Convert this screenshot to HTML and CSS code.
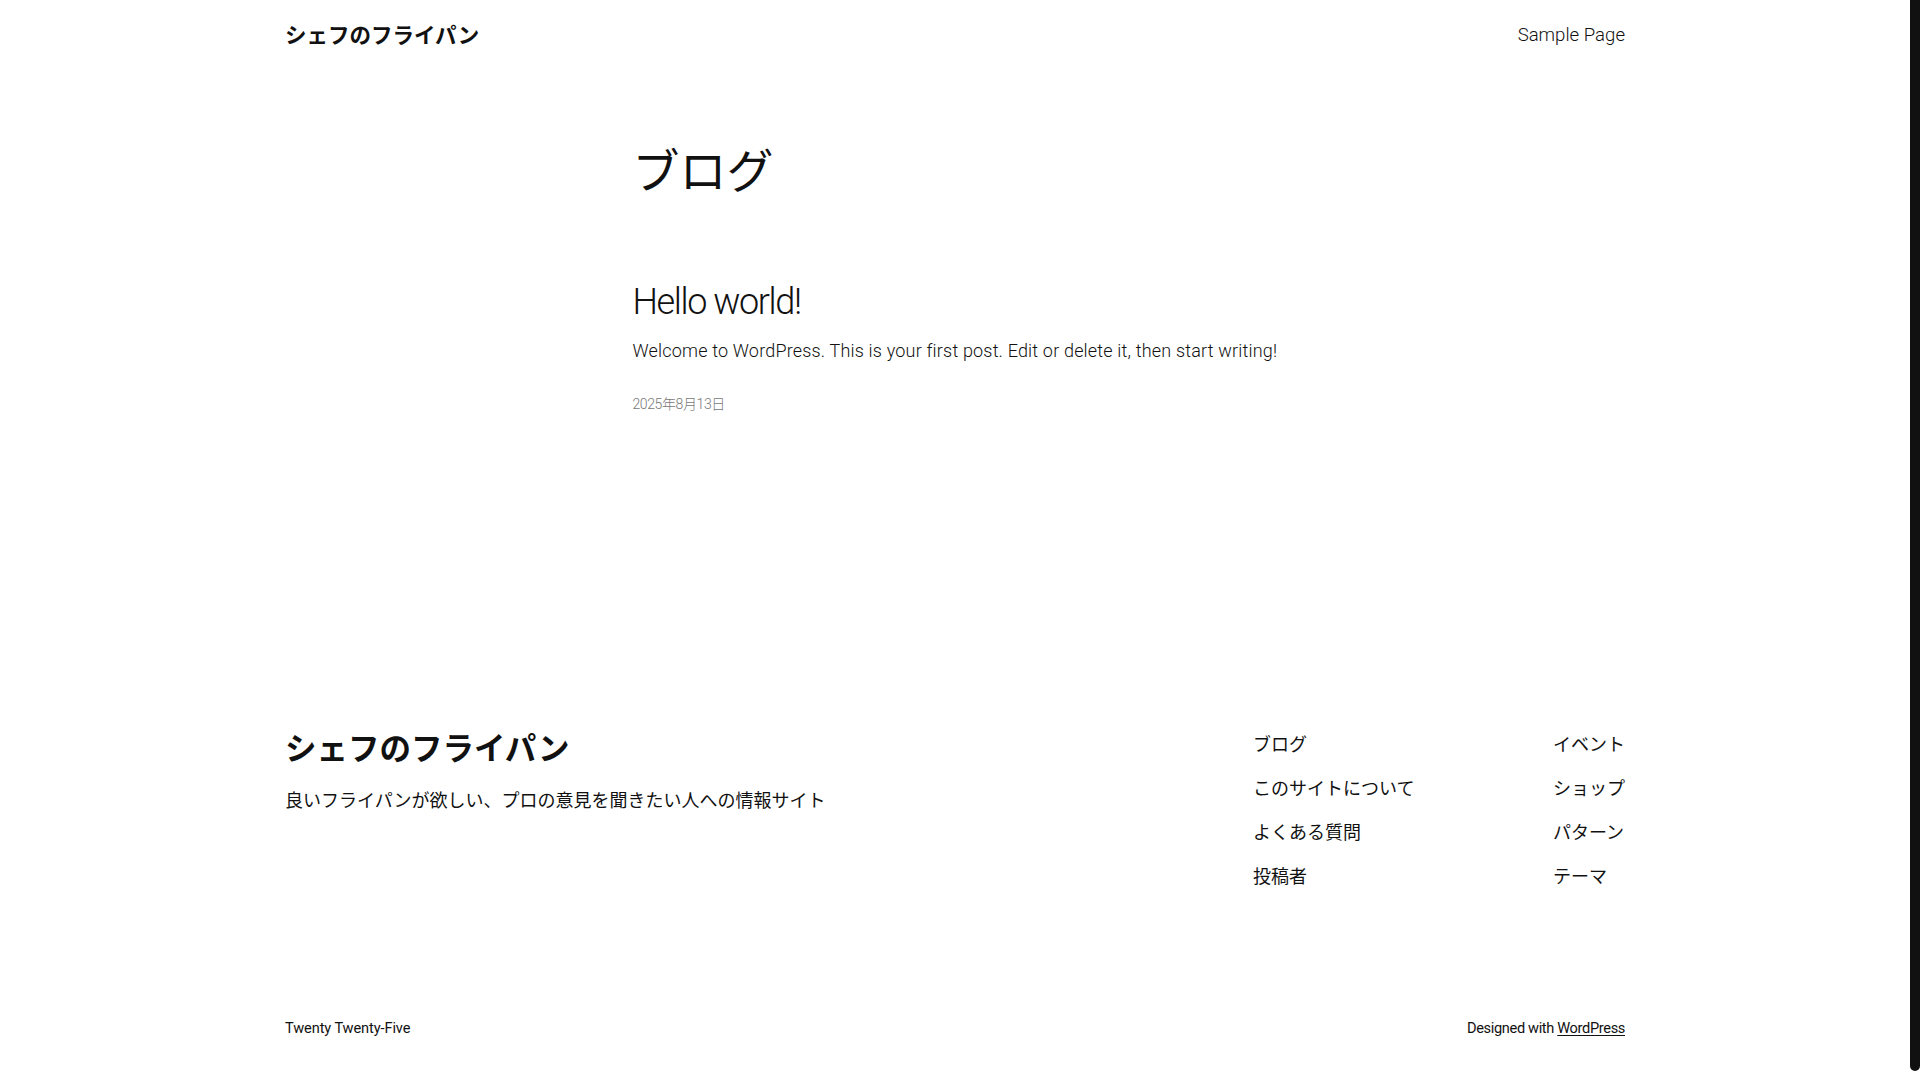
FILE: index.html
```html
<!DOCTYPE html>
<html lang="ja">
<head>
<meta charset="utf-8">
<title>ブログ – シェフのフライパン</title>
<link rel="stylesheet" href="styles.css">
</head>
<body>
<header class="site-header">
  <div class="wide header-inner">
    <a class="site-title" href="#">シェフのフライパン</a>
    <nav class="main-nav"><a href="#">Sample Page</a></nav>
  </div>
</header>

<main class="site-main">
  <div class="content">
    <h1 class="page-title">ブログ</h1>
    <article class="post">
      <h2 class="post-title"><a href="#">Hello world!</a></h2>
      <p class="post-excerpt">Welcome to WordPress. This is your first post. Edit or delete it, then start writing!</p>
      <p class="post-date">2025年8月13日</p>
    </article>
  </div>
</main>

<footer class="site-footer">
  <div class="wide footer-top">
    <div class="footer-brand">
      <a class="footer-title" href="#">シェフのフライパン</a>
      <p class="tagline">良いフライパンが欲しい、プロの意見を聞きたい人への情報サイト</p>
    </div>
    <nav class="footer-nav">
      <ul class="nav-col col-a">
        <li><a href="#">ブログ</a></li>
        <li><a href="#">このサイトについて</a></li>
        <li><a href="#">よくある質問</a></li>
        <li><a href="#">投稿者</a></li>
      </ul>
      <ul class="nav-col col-b">
        <li><a href="#">イベント</a></li>
        <li><a href="#">ショップ</a></li>
        <li><a href="#">パターン</a></li>
        <li><a href="#">テーマ</a></li>
      </ul>
    </nav>
  </div>
  <div class="wide footer-bottom">
    <p class="credit-theme">Twenty Twenty-Five</p>
    <p class="credit-wp">Designed with <a href="#">WordPress</a></p>
  </div>
</footer>
<div class="scrollbar" aria-hidden="true"></div>
</body>
</html>
```

FILE: styles.css
```css
html {
  background: #fff;
}

body {
  margin: 0 10px 0 0;
  background: #fff;
  color: #111;
  font-family: Roboto, "Noto Sans CJK JP", sans-serif;
  font-size: 18px;
  font-weight: 300;
  -webkit-font-smoothing: antialiased;
}

a {
  color: inherit;
  text-decoration: none;
}

p, h1, h2, ul {
  margin: 0;
  padding: 0;
}

.wide {
  width: 1340px;
  margin: 0 auto;
}

.content {
  width: 645px;
  margin: 0 auto;
}

/* fake scrollbar thumb, overlaid at the right edge */
.scrollbar {
  position: fixed;
  top: 0;
  right: 0;
  width: 10px;
  height: 1071px;
  background: #111;
  border-radius: 0 0 5px 5px;
}

/* Header */
.header-inner {
  height: 68px;
  display: flex;
  align-items: center;
  justify-content: space-between;
}

.site-title {
  font-family: "Noto Sans CJK JP", sans-serif;
  font-weight: 700;
  font-size: 21.5px;
  line-height: 30px;
}

.main-nav a {
  display: block;
  padding-top: 2px;
  font-size: 18.6px;
  line-height: 26px;
  letter-spacing: 0;
}

/* Main */
.site-main {
  padding-top: 70px;
  min-height: 588px;
  box-sizing: border-box;
}

.page-title {
  font-family: "Noto Sans CJK JP", sans-serif;
  font-weight: 400;
  font-size: 47px;
  line-height: 60px;
}

.post {
  padding-top: 82px;
}

.post-title {
  font-weight: 300;
  font-size: 36px;
  line-height: 44px;
  letter-spacing: -1.4px;
}

.post-excerpt {
  margin-top: 13px;
  font-size: 18px;
  line-height: 28px;
  letter-spacing: 0.18px;
}

.post-date {
  margin-top: 29px;
  font-size: 14px;
  line-height: 20px;
  color: #777;
  letter-spacing: -0.4px;
}

/* Footer */
.site-footer {
  padding-top: 8px;
  padding-bottom: 50px;
}

.footer-top {
  display: flex;
  justify-content: space-between;
  align-items: flex-start;
}

.footer-brand {
  padding-top: 62px;
}

.footer-title {
  display: block;
  font-family: "Noto Sans CJK JP", sans-serif;
  font-weight: 700;
  font-size: 31.5px;
  line-height: 40px;
}

.tagline {
  margin-top: 20px;
  font-family: "Noto Sans CJK JP", sans-serif;
  font-weight: 400;
  font-size: 18px;
  line-height: 26px;
}

.footer-nav {
  display: flex;
  gap: 138px;
  padding-top: 66px;
}

.nav-col {
  list-style: none;
  display: flex;
  flex-direction: column;
  gap: 18px;
  font-family: "Noto Sans CJK JP", sans-serif;
  font-weight: 400;
  font-size: 18px;
  line-height: 26px;
}

.col-a {
  width: 162px;
}

.col-b {
  width: 72px;
}

.footer-bottom {
  margin-top: 130px;
  display: flex;
  justify-content: space-between;
  font-size: 14.6px;
  font-weight: 400;
  line-height: 21px;
  letter-spacing: -0.1px;
}

.credit-wp {
  letter-spacing: -0.35px;
}

.credit-wp a {
  text-decoration: underline;
  text-underline-offset: 2px;
}
```
